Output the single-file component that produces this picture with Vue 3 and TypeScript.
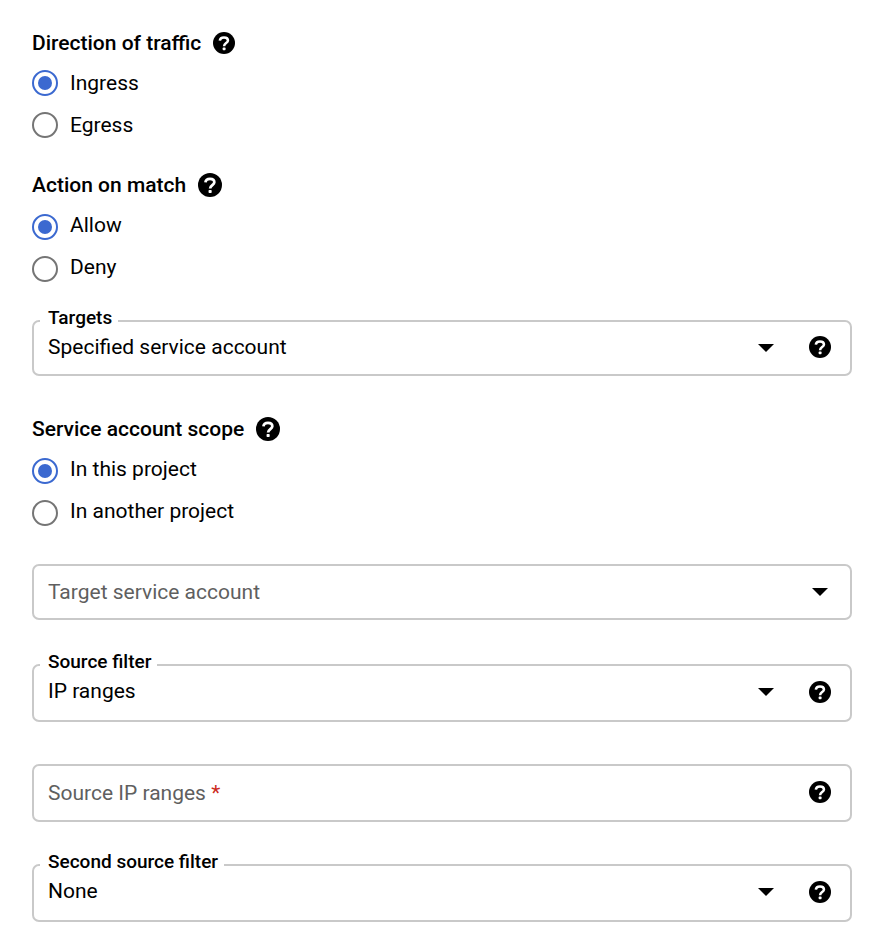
<script setup lang="ts">
import { reactive, ref } from 'vue'

interface RadioGroup {
  id: string
  title: string
  compact: boolean
  options: string[]
}

interface Field {
  id: string
  label: string
  kind: 'select' | 'text'
  options: string[]
  tall: boolean
  floating: boolean
  required: boolean
  help: boolean
}

type Section = { group: RadioGroup; fields: Field[] }

const makeField = (id: string, label: string, rest: Partial<Field>): Field => ({
  id,
  label,
  kind: 'select',
  options: [],
  tall: true,
  floating: true,
  required: false,
  help: true,
  ...rest,
})

const sections = ref<Section[]>([
  {
    group: { id: 'direction', title: 'Direction of traffic', compact: true, options: ['Ingress', 'Egress'] },
    fields: [],
  },
  {
    group: { id: 'action', title: 'Action on match', compact: false, options: ['Allow', 'Deny'] },
    fields: [makeField('targets', 'Targets', { options: ['Specified service account'], tall: false })],
  },
  {
    group: {
      id: 'scope',
      title: 'Service account scope',
      compact: false,
      options: ['In this project', 'In another project'],
    },
    fields: [
      makeField('account', 'Target service account', { tall: false, floating: false, help: false }),
      makeField('source', 'Source filter', { options: ['IP ranges'] }),
      makeField('ranges', 'Source IP ranges', { kind: 'text', floating: false, required: true }),
      makeField('second', 'Second source filter', { options: ['None'] }),
    ],
  },
])

const values = reactive<Record<string, string>>({
  direction: 'Ingress',
  action: 'Allow',
  scope: 'In this project',
  targets: 'Specified service account',
  account: '',
  source: 'IP ranges',
  ranges: '',
  second: 'None',
})

const hookPath = 'M8.2 9.8C8.4 7.9 9.9 6.9 12 6.9c2.2 0 3.6 1.1 3.6 2.8 0 2.3-3.5 2.5-3.5 5.2'
</script>

<template>
  <form class="rule-form" @submit.prevent>
    <section v-for="section in sections" :key="section.group.id" class="section">
      <div
        class="group"
        :class="{ compact: section.group.compact }"
        role="radiogroup"
        :aria-labelledby="section.group.id + '-title'"
      >
        <div class="heading">
          <span :id="section.group.id + '-title'">{{ section.group.title }}</span>
          <button type="button" class="help">
            <svg viewBox="2 2 20 20" aria-hidden="true">
              <circle class="disc" cx="12" cy="12" r="10" />
              <path class="hook" :d="hookPath" />
              <rect class="dot" x="10.8" y="16.1" width="2.6" height="2.5" rx="0.6" />
            </svg>
          </button>
        </div>
        <label v-for="option in section.group.options" :key="option" class="option">
          <input v-model="values[section.group.id]" type="radio" :name="section.group.id" :value="option" />
          <span>{{ option }}</span>
        </label>
      </div>

      <div v-if="section.fields.length" class="fields">
        <div
          v-for="field in section.fields"
          :key="field.id"
          class="field"
          :class="{ tall: field.tall, floating: field.floating }"
        >
          <label
            v-if="field.floating || !values[field.id]"
            :for="field.id"
            :class="field.floating ? 'notch' : 'placeholder'"
          >
            {{ field.label }} <span v-if="field.required" class="star">*</span>
          </label>
          <div class="control">
            <select v-if="field.kind === 'select'" :id="field.id" v-model="values[field.id]">
              <option v-for="option in field.options" :key="option">{{ option }}</option>
            </select>
            <input v-else :id="field.id" v-model="values[field.id]" type="text" required />
            <svg v-if="field.kind === 'select'" class="caret" viewBox="0 0 16 8" aria-hidden="true">
              <path d="M0 0h16L8 8z" />
            </svg>
          </div>
          <button v-if="field.help" type="button" class="help">
            <svg viewBox="2 2 20 20" aria-hidden="true">
              <circle class="disc" cx="12" cy="12" r="10" />
              <path class="hook" :d="hookPath" />
              <rect class="dot" x="10.8" y="16.1" width="2.6" height="2.5" rx="0.6" />
            </svg>
          </button>
        </div>
      </div>
    </section>
  </form>
</template>

<style>
body {
  margin: 0;
  background: #fff;
}
</style>

<style scoped>
.rule-form {
  display: flex;
  flex-direction: column;
  gap: 20px;
  padding: 24px 40px 18px 32px;
  font-family: Roboto, 'Liberation Sans', sans-serif;
  font-size: 21px;
  line-height: 24px;
  color: #000;
}

.section {
  display: flex;
  flex-direction: column;
}

.section + .section .fields {
  padding-top: 30px;
}

.section:last-child {
  padding-top: 12px;
}

.group {
  display: flex;
  flex-direction: column;
}

.heading {
  display: flex;
  align-items: center;
  gap: 12px;
  height: 38px;
  margin-bottom: 2px;
  font-weight: 500;
}

.option {
  display: flex;
  align-items: center;
  gap: 12px;
  height: 42px;
  cursor: pointer;
}

.option span {
  padding-bottom: 4px;
}

.compact .heading {
  margin-bottom: 0;
}

.compact .option span {
  padding-bottom: 0;
}

.option input {
  display: grid;
  place-items: center;
  box-sizing: border-box;
  width: 26px;
  height: 26px;
  margin: 0;
  border: 2px solid #757575;
  border-radius: 50%;
  appearance: none;
  background: #fff;
}

.option input:checked {
  border-color: #3b69d0;
}

.option input:checked::before {
  content: '';
  width: 14px;
  height: 14px;
  border-radius: 50%;
  background: #3b69d0;
}

.help {
  display: block;
  flex: none;
  width: 24px;
  height: 24px;
  padding: 0;
  border: 0;
  background: none;
  color: #000;
  cursor: pointer;
}

.help svg {
  display: block;
  width: 100%;
  height: 100%;
}

.disc {
  fill: currentColor;
}

.hook {
  fill: none;
  stroke: #fff;
  stroke-width: 2.3;
}

.dot {
  fill: #fff;
}

.compact .help,
.field .help {
  width: 22px;
  height: 22px;
}

.fields {
  display: flex;
  flex-direction: column;
  gap: 42px;
}

.field {
  position: relative;
  display: flex;
  align-items: center;
  box-sizing: border-box;
  min-height: 56px;
  margin-bottom: 2px;
  padding-right: 19px;
  border: 2px solid #c9c9c9;
  border-radius: 7px;
}

.tall {
  min-height: 58px;
  margin-bottom: 0;
}

.field .help {
  margin-bottom: 2px;
  margin-left: 17px;
}

.control {
  display: grid;
  flex: 1;
  align-items: center;
}

.tall.floating .control {
  padding-bottom: 2px;
}

.control > * {
  grid-area: 1 / 1;
}

.control select,
.control input {
  width: 100%;
  min-width: 0;
  height: 52px;
  margin: 0;
  padding: 0 34px 0 14px;
  border: 0;
  outline: 0;
  appearance: none;
  background: transparent;
  font: inherit;
  color: #000;
}

.floating select {
  padding-bottom: 3px;
}

.caret {
  justify-self: end;
  width: 16px;
  height: 8px;
  margin-right: 18px;
  pointer-events: none;
}

.field > .control:last-child .caret {
  margin-right: 3px;
}

.notch {
  position: absolute;
  top: -15px;
  left: 6px;
  z-index: 1;
  padding: 0 6px 0 8px;
  background: #fff;
  font-size: 19px;
  line-height: 22px;
  font-weight: 500;
}

.placeholder {
  position: absolute;
  left: 14px;
  color: #5f5f5f;
  pointer-events: none;
}

.star {
  color: #cc2a1e;
}
</style>
